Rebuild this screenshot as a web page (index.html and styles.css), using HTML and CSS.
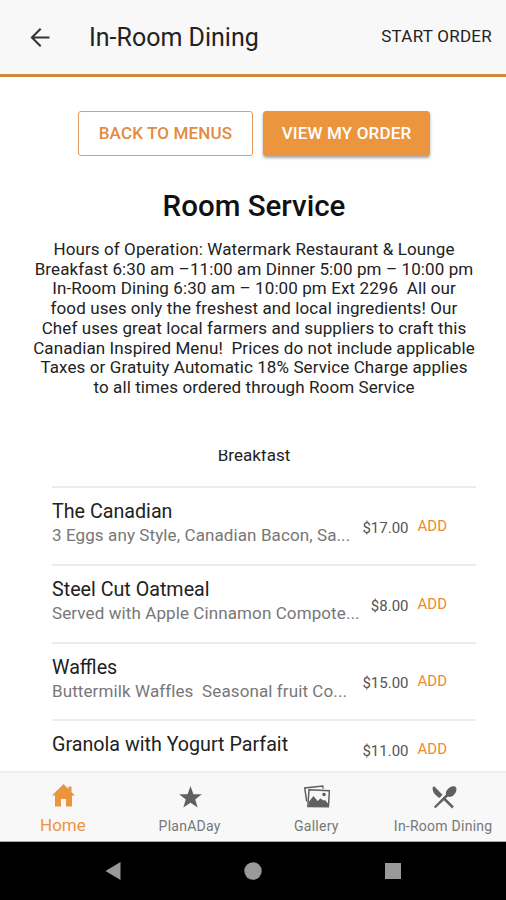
FILE: index.html
```
<!DOCTYPE html>
<html lang="en">
<head>
  <meta charset="UTF-8">
  <meta name="viewport" content="width=device-width, initial-scale=1.0">
  <title>In-Room Dining</title>
  <link rel="stylesheet" href="styles.css">
</head>
<body>

  <header class="header">
    <svg class="back" viewBox="0 0 20 20"><path d="M19.5 10.500H2M10.700 1.700L1.900 10.500l8.800 8.800"/></svg>
    <h1>In-Room Dining</h1>
    <span class="start">START ORDER</span>
  </header>

  <main class="content">
    <div class="buttons">
      <button class="btn outline">BACK TO MENUS</button>
      <button class="btn solid">VIEW MY ORDER</button>
    </div>

    <h2>Room Service</h2>
    <p class="info">Hours of Operation: Watermark Restaurant &amp; Lounge<br>Breakfast 6:30 am –11:00 am Dinner 5:00 pm – 10:00 pm<br>In-Room Dining 6:30 am – 10:00 pm Ext 2296&nbsp; All our<br>food uses only the freshest and local ingredients! Our<br>Chef uses great local farmers and suppliers to craft this<br>Canadian Inspired Menu!&nbsp; Prices do not include applicable<br>Taxes or Gratuity Automatic 18% Service Charge applies<br>to all times ordered through Room Service</p>

    <h3><span>Breakfast</span></h3>

    <ul class="menu">
      <li>
        <div class="item">
          <div class="name">The Canadian</div>
          <div class="desc">3 Eggs any Style, Canadian Bacon, Sa...</div>
        </div>
        <span class="price">$17.00</span>
        <span class="add">ADD</span>
      </li>
      <li>
        <div class="item">
          <div class="name">Steel Cut Oatmeal</div>
          <div class="desc">Served with Apple Cinnamon Compote...</div>
        </div>
        <span class="price">$8.00</span>
        <span class="add">ADD</span>
      </li>
      <li>
        <div class="item">
          <div class="name">Waffles</div>
          <div class="desc">Buttermilk Waffles&nbsp; Seasonal fruit Co...</div>
        </div>
        <span class="price">$15.00</span>
        <span class="add">ADD</span>
      </li>
      <li class="short">
        <div class="item">
          <div class="name">Granola with Yogurt Parfait</div>
        </div>
        <span class="price">$11.00</span>
        <span class="add">ADD</span>
      </li>
    </ul>
  </main>

  <nav class="tabs">
    <a class="tab active">
      <svg viewBox="0 0 28 28"><path d="M14.500 1L3 12.500h3V23.500h6V16h5v7.500h6v-11h3L22.500 9V3.500h-3V6z"/></svg>
      <span>Home</span>
    </a>
    <a class="tab">
      <svg viewBox="0 0 28 28"><path d="M14.500 3l2.900 8.300h8.400l-6.600 5.200 2.500 8.100-7.200-4.900-7.200 4.900 2.500-8.100-6.600-5.200h8.400z"/></svg>
      <span>PlanADay</span>
    </a>
    <a class="tab">
      <svg viewBox="0 0 28 28">
        <path class="line" d="M4.700 18.500L2.700 5l18-2 .4 2.500"/>
        <path class="line" d="M7 6.700l20.400 1-1 16-20.600-.2z"/>
        <path d="M6.500 23.500l.2-4.500 4.800-6 4 5 3-2.500 3 2 1.500-.5 3.300 4-.2 2.500z"/>
        <circle cx="22" cy="11.500" r="1.800"/>
      </svg>
      <span>Gallery</span>
    </a>
    <a class="tab">
      <svg viewBox="0 0 28 28">
        <path d="M3.700 4.200l1.500-.9 8.300 8.500-3 3.200C6 12.500 3 8 3.700 4.200z"/>
        <path d="M17 11.500c-1-3 3-8 7-8.200 3-.1 4 2 3.200 4.700-1 3.800-5 7-8.400 5.600L6.500 25.300l-1.600-1.600z"/>
        <path class="thick" d="M15.500 16l8.500 8.500"/>
      </svg>
      <span>In-Room Dining</span>
    </a>
  </nav>

  <footer class="system">
    <svg viewBox="0 0 20 20"><path d="M2.500 10L17.500 1v18z"/></svg>
    <svg viewBox="0 0 20 20"><circle cx="10" cy="10" r="8.700"/></svg>
    <svg viewBox="0 0 20 20"><rect x="2" y="2" width="16" height="16"/></svg>
  </footer>

</body>
</html>
```
FILE: styles.css
```
* {
  box-sizing: border-box;
}

body {
  margin: 0;
  width: 506px;
  height: 900px;
  display: flex;
  flex-direction: column;
  overflow: hidden;
  background-color: #fff;
  color: #222;
  font-family: Roboto, sans-serif;
}

.header {
  height: 77px;
  flex: none;
  display: flex;
  align-items: center;
  padding: 0 14px 0 30px;
  background-color: #f8f8f8;
  border-bottom: 3px solid #d08a3c;
}

.back {
  width: 20px;
  height: 20px;
  fill: none;
  stroke: #333;
  stroke-width: 2;
}

h1 {
  flex: 1;
  margin: 1px 0 0 39px;
  font-size: 25px;
  font-weight: 400;
}

.start {
  padding-bottom: 2px;
  font-size: 17px;
  letter-spacing: 0.25px;
}

.content {
  flex: 1;
  min-height: 0;
  overflow: hidden;
}

.buttons {
  display: flex;
  justify-content: center;
  gap: 10px;
  margin: 34px 0 0 2px;
}

.btn {
  height: 45px;
  padding: 0 0 2px;
  border: 1px solid #e79a5c;
  border-radius: 3px;
  font-family: inherit;
  font-size: 17px;
  font-weight: 500;
  letter-spacing: 0.15px;
}

.outline {
  width: 175px;
  background-color: #fff;
  color: #e28b42;
}

.solid {
  width: 167px;
  border-color: #eb963f;
  background-color: #eb963f;
  color: #fff;
  box-shadow: 0 2px 3px rgba(0, 0, 0, 0.35);
}

h2 {
  margin: 32px 0 0 2px;
  font-size: 29.500px;
  line-height: 36px;
  font-weight: 500;
  text-align: center;
  color: #111;
}

.info {
  margin: 16px 0 0 2px;
  font-size: 17px;
  line-height: 19.7px;
  letter-spacing: 0.1px;
  text-align: center;
}

/* the section title is cut off a little at the top */
h3 {
  margin: 52px 0 0 2px;
  height: 19px;
  overflow: hidden;
  font-size: 17px;
  line-height: 20px;
  font-weight: 400;
  text-align: center;
}

h3 span {
  display: block;
  margin-top: -5px;
}

.menu {
  list-style: none;
  margin: 17.500px 30px 0 52px;
  padding: 0;
}

.menu li {
  display: flex;
  align-items: center;
  height: 77.700px;
  padding: 0 29px 0 0;
  border-top: 2px solid #ececec;
}

.menu .short {
  height: 60px;
  padding-bottom: 2px;
}

.item {
  flex: 1;
  padding-bottom: 5px;
  white-space: nowrap;
}

.short .item {
  padding-bottom: 9px;
}

.name {
  font-size: 19.700px;
  line-height: 24px;
}

.desc {
  font-size: 17px;
  line-height: 22px;
  letter-spacing: 0.1px;
  color: #777;
}

.price {
  padding-top: 4px;
  font-size: 15px;
  color: #555;
}

.add {
  margin-left: 9px;
  font-size: 15px;
  color: #eb8b32;
}

.tabs {
  flex: none;
  display: flex;
  height: 71px;
  background-color: #f8f8f8;
  border-top: 2px solid #f0f0f0;
  border-bottom: 1px solid #aaa;
}

.tab {
  flex: 1 1 0;
  display: flex;
  flex-direction: column;
  align-items: center;
  padding: 10px 0 0 1px;
  font-size: 14px;
  line-height: 16px;
  letter-spacing: 0.25px;
  white-space: nowrap;
  color: #777;
}

.tab svg {
  width: 28px;
  height: 28px;
  margin-bottom: 7px;
  fill: #606060;
}

.tab .line {
  fill: none;
  stroke: #606060;
  stroke-width: 1.500;
}

.tab .thick {
  stroke: #606060;
  stroke-width: 2.500;
}

.tab.active {
  padding-left: 0;
  font-size: 17px;
  line-height: 14px;
  letter-spacing: 0;
  color: #eb963f;
}

.tab.active svg {
  fill: #eb963f;
}

.system {
  flex: none;
  height: 58px;
  display: flex;
  justify-content: center;
  align-items: center;
  gap: 120px;
  background-color: #000;
}

.system svg {
  width: 20px;
  height: 20px;
  fill: #999;
}
```
